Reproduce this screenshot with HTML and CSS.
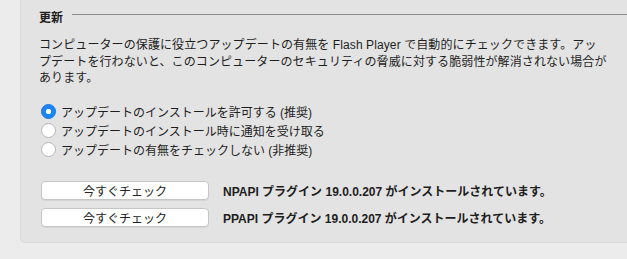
FILE: index.html
```html
<!DOCTYPE html>
<html lang="ja">
<head>
  <meta charset="UTF-8">
  <title>Flash Player 更新</title>
  <link rel="stylesheet" href="styles.css">
</head>
<body>
  <div class="panel">
    <div class="section-head">
      <span class="section-title">更新</span>
      <span class="section-rule"></span>
    </div>

    <p class="desc">コンピューターの保護に役立つアップデートの有無を Flash Player で自動的にチェックできます。アッ<br>プデートを行わないと、このコンピューターのセキュリティの脅威に対する脆弱性が解消されない場合が<br>あります。</p>

    <div class="options">
      <label class="option">
        <input type="radio" name="update" checked>
        <span>アップデートのインストールを許可する (推奨)</span>
      </label>
      <label class="option">
        <input type="radio" name="update">
        <span>アップデートのインストール時に通知を受け取る</span>
      </label>
      <label class="option">
        <input type="radio" name="update">
        <span>アップデートの有無をチェックしない (非推奨)</span>
      </label>
    </div>

    <div class="plugins">
      <div class="plugin-row">
        <button type="button" class="check-btn">今すぐチェック</button>
        <span class="plugin-info">NPAPI プラグイン 19.0.0.207 がインストールされています。</span>
      </div>
      <div class="plugin-row">
        <button type="button" class="check-btn">今すぐチェック</button>
        <span class="plugin-info">PPAPI プラグイン 19.0.0.207 がインストールされています。</span>
      </div>
    </div>
  </div>
</body>
</html>
```

FILE: styles.css
```css
body {
  margin: 0;
  height: 259px;
  background-color: #ececec;
  font-family: "Liberation Sans", "Noto Sans CJK JP", sans-serif;
  font-size: 12px;
  color: #1e1e1e;
  overflow: hidden;
}
.panel {
  margin-left: 20px;
  height: 243px;
  box-sizing: border-box;
  padding: 8px 0 0 18px;
  background-color: #e3e3e3;
  border-left: 1px solid #d9d9d9;
  border-bottom: 1px solid #d9d9d9;
  border-bottom-left-radius: 5px;
}
.section-head {
  display: flex;
  align-items: center;
  gap: 9px;
  height: 16px;
}
.section-title {
  font-weight: bold;
  font-size: 12px;
}
.section-rule {
  flex: 1;
  height: 1px;
  background-color: #8c8c8c;
  margin-top: -3px;
}
.desc {
  margin: 13px 0 0;
  line-height: 16.5px;
  letter-spacing: 0.1px;
  white-space: nowrap;
}
.options {
  display: flex;
  flex-direction: column;
  gap: 3px;
  margin-top: 17px;
}
.option {
  display: flex;
  align-items: center;
  gap: 5px;
  height: 16px;
}
.option input {
  appearance: none;
  margin: 0 0 0 2px;
  width: 15px;
  height: 15px;
  border-radius: 50%;
  background-color: #fff;
  border: 1px solid #b4b4b4;
  box-sizing: border-box;
}
.option input:checked {
  background-color: #1c84fb;
  border-color: #1577e6;
  background-image: radial-gradient(circle, #fff 0 2.5px, transparent 3px);
}
.plugins {
  display: flex;
  flex-direction: column;
  gap: 8px;
  margin-top: 23px;
}
.plugin-row {
  display: flex;
  align-items: center;
  gap: 14px;
}
.check-btn {
  width: 168px;
  height: 19px;
  margin-left: 2px;
  padding: 0;
  font-family: inherit;
  font-size: 12px;
  color: #222;
  background-color: #fff;
  border: 1px solid #c6c6c6;
  border-radius: 4px;
  box-shadow: 0 1px 0 rgba(0, 0, 0, 0.06);
}
.plugin-info {
  font-weight: bold;
}
```
